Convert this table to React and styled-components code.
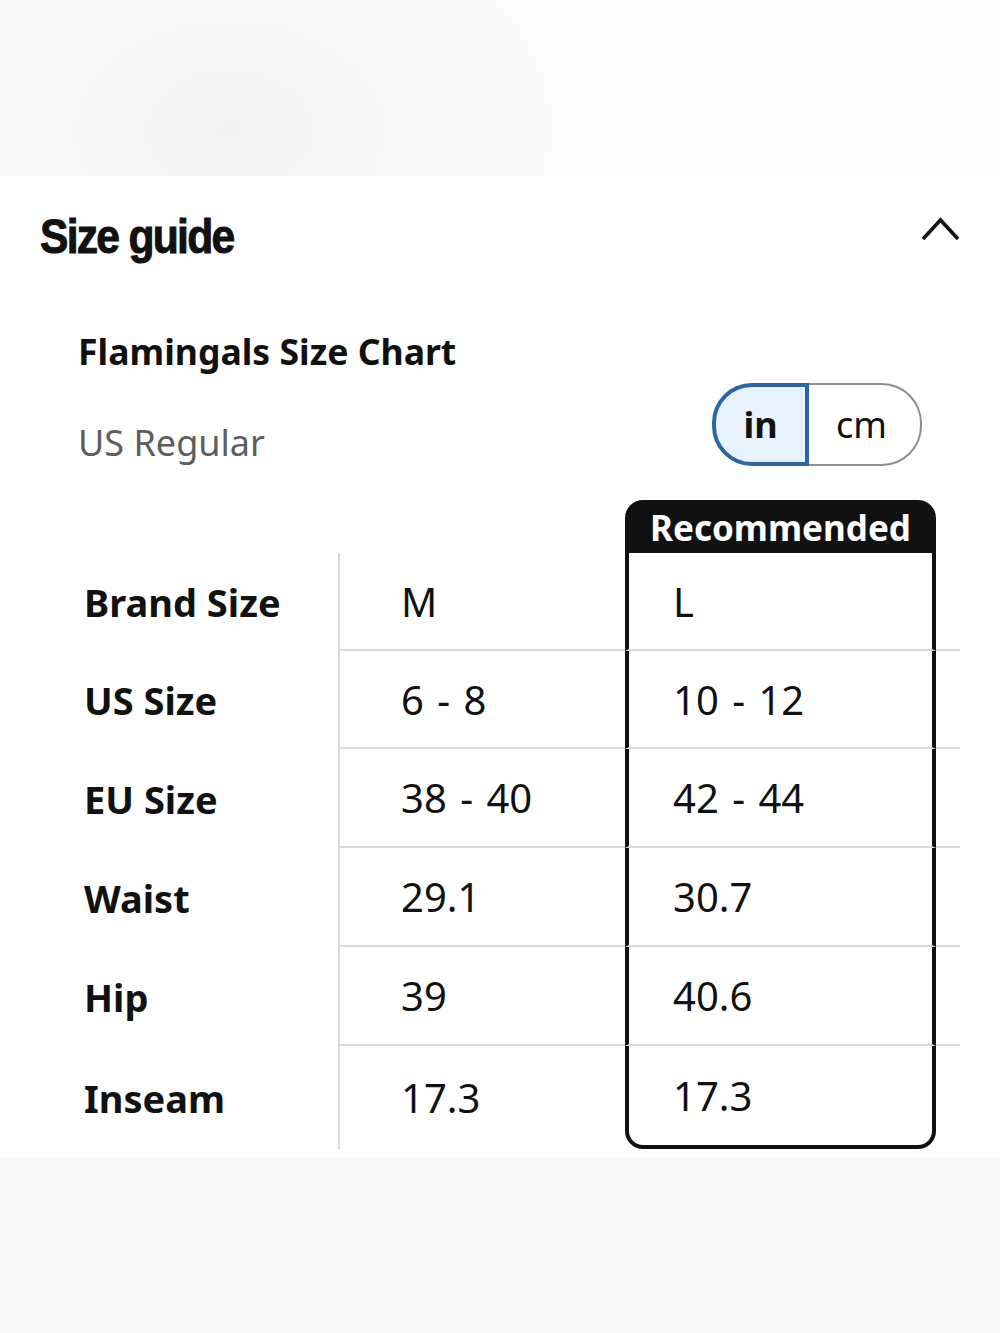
import React from "react";
import styled, { createGlobalStyle } from "styled-components";

const Global = createGlobalStyle`
  html, body { margin: 0; padding: 0; background: #ffffff; }
  body { font-family: "Noto Sans", "Open Sans", sans-serif; color: #111; }
`;

const Page = styled.div`
  display: flex;
  flex-direction: column;
  min-height: 1333px;
  width: 1000px;
`;

const Band = styled.div`
  height: ${(p) => p.$h}px;
  flex: ${(p) => (p.$grow ? 1 : "none")};
  background: ${(p) => p.$bg};
`;

const Card = styled.section`
  background: #fff;
  padding: 30px 40px 9px 40px;
  display: flex;
  flex-direction: column;
`;

const HeadingRow = styled.div`
  display: flex;
  align-items: center;
  justify-content: space-between;
  height: 60px;
`;

const Heading = styled.h2`
  margin: 0;
  font-family: "Liberation Sans", Arial, sans-serif;
  font-weight: 700;
  font-size: 49px;
  letter-spacing: -2px;
  line-height: 60px;
  transform: scaleX(0.87);
  transform-origin: left center;
  -webkit-text-stroke: 1px #111;
  color: #111;
`;

const Chevron = styled.svg`
  width: 42px;
  height: 28px;
  display: block;
  margin-bottom: 14px;
`;

const ChartTitle = styled.h3`
  margin: 60px 0 0 38px;
  font-size: 35.6px;
  font-weight: 700;
  line-height: 50px;
  height: 50px;
  color: #111;
`;

const ControlsRow = styled.div`
  display: flex;
  align-items: flex-end;
  justify-content: space-between;
  margin: 7px 38px 0 38px;
`;

const SubTitle = styled.div`
  font-size: 36px;
  line-height: 46px;
  color: #5d5d5d;
  font-weight: 400;
`;

const Toggle = styled.div`
  display: flex;
  height: 83px;
`;

const ToggleBtn = styled.button`
  box-sizing: border-box;
  height: 83px;
  width: ${(p) => p.$w}px;
  font-family: "Noto Sans", sans-serif;
  font-size: 36px;
  font-weight: ${(p) => (p.$active ? 700 : 400)};
  color: #111;
  background: ${(p) => (p.$active ? "#e9f3fd" : "#fff")};
  border: ${(p) => (p.$active ? "4px solid #2c66a8" : "2px solid #8f8f8f")};
  border-left-width: ${(p) => (p.$active ? "4px" : "0")};
  border-radius: ${(p) => (p.$active ? "40px 0 0 40px" : "0 40px 40px 0")};
  padding: 0;
  padding-right: ${(p) => (p.$active ? "0" : "6px")};
  display: flex;
  align-items: center;
  justify-content: center;
  cursor: pointer;
`;

const Table = styled.div`
  display: grid;
  grid-template-columns: 254px 287px 311px 24px;
  grid-template-rows: 53px 98px 98px 99px 99px 99px 103px;
  margin: 34px 0 0 44px;
`;

const RecHeader = styled.div`
  background: #111;
  color: #fff;
  border-radius: 18px 18px 0 0;
  display: flex;
  align-items: center;
  justify-content: center;
  font-size: 35px;
  font-weight: 700;
  line-height: 1;
  padding-top: 2px;
`;

const Spacer = styled.div``;

const Cell = styled.div`
  box-sizing: border-box;
  display: flex;
  align-items: center;
  font-size: ${(p) => (p.$kind === "label" ? 38 : 40)}px;
  font-weight: ${(p) => (p.$kind === "label" ? 700 : 400)};
  word-spacing: ${(p) => (p.$kind === "label" ? 0 : 3)}px;
  color: #111;
  padding-left: ${(p) =>
    p.$kind === "label" ? 0 : p.$kind === "std" ? 61 : p.$kind === "rec" ? 44 : 0}px;
  border-bottom: ${(p) =>
    p.$kind === "label"
      ? "none"
      : p.$last
      ? p.$kind === "rec"
        ? "4px solid #111"
        : "none"
      : "2px solid #dadada"};
  border-left: ${(p) =>
    p.$kind === "std" ? "2px solid #dadada" : p.$kind === "rec" ? "4px solid #111" : "none"};
  border-right: ${(p) => (p.$kind === "rec" ? "4px solid #111" : "none")};
  border-radius: ${(p) => (p.$kind === "rec" && p.$last ? "0 0 18px 18px" : "0")};
`;

const rows = [
  ["Brand Size", "M", "L"],
  ["US Size", "6 - 8", "10 - 12"],
  ["EU Size", "38 - 40", "42 - 44"],
  ["Waist", "29.1", "30.7"],
  ["Hip", "39", "40.6"],
  ["Inseam", "17.3", "17.3"],
];

export default function App() {
  const [unit, setUnit] = React.useState("in");
  return (
    <Page>
      <Global />
      <Band
        $h={176}
        $bg="radial-gradient(ellipse 420px 300px at 230px 130px, #f3f3f3 0%, #f8f8f8 45%, #fdfdfd 100%)"
      />
      <Card>
        <HeadingRow>
          <Heading>Size guide</Heading>
          <Chevron viewBox="0 0 42 28">
            <polyline
              points="5,24 22.5,5 40,24"
              fill="none"
              stroke="#111"
              strokeWidth="3.6"
              strokeLinecap="butt"
              strokeLinejoin="miter"
            />
          </Chevron>
        </HeadingRow>
        <ChartTitle>Flamingals Size Chart</ChartTitle>
        <ControlsRow>
          <SubTitle>US Regular</SubTitle>
          <Toggle>
            <ToggleBtn $w={97} $active={unit === "in"} onClick={() => setUnit("in")}>
              in
            </ToggleBtn>
            <ToggleBtn $w={113} $active={unit === "cm"} onClick={() => setUnit("cm")}>
              cm
            </ToggleBtn>
          </Toggle>
        </ControlsRow>
        <Table>
          <Spacer />
          <Spacer />
          <RecHeader>Recommended</RecHeader>
          <Spacer />
          {rows.map((r, i) => {
            const last = i === rows.length - 1;
            return (
              <React.Fragment key={r[0]}>
                <Cell $kind="label" $last={last}>{r[0]}</Cell>
                <Cell $kind="std" $last={last}>{r[1]}</Cell>
                <Cell $kind="rec" $last={last}>{r[2]}</Cell>
                <Cell $kind="tail" $last={last} />
              </React.Fragment>
            );
          })}
        </Table>
      </Card>
      <Band
        $grow
        $bg="linear-gradient(180deg, #f9f9f9 0%, #f8f8f8 100%)"
      />
    </Page>
  );
}
